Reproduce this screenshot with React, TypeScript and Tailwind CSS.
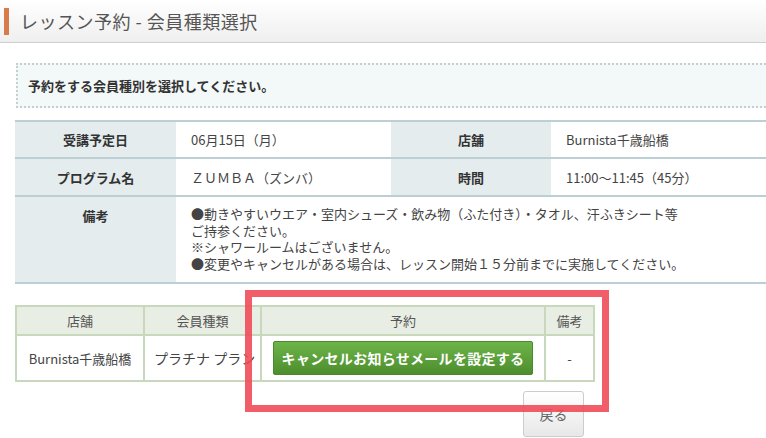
import React from 'react';

const remarks = [
  '●動きやすいウエア・室内シューズ・飲み物（ふた付き）・タオル、汗ふきシート等',
  'ご持参ください。',
  '※シャワールームはございません。',
  '●変更やキャンセルがある場合は、レッスン開始１５分前までに実施してください。',
];

export default function App() {
  const labelCell = 'bg-[#e4ecee] text-center font-bold text-[#333] align-middle';
  const valueCell = 'bg-white text-[#444] pl-[15px] align-middle';

  return (
    <div className="relative w-[766px] h-[438px] overflow-hidden bg-white font-['Noto_Sans_CJK_JP','Noto_Sans',sans-serif] text-[13px]">
      {/* page header */}
      <div className="h-[43px] border-b border-[#cfcfcf] bg-gradient-to-b from-white to-[#efefef] flex items-center">
        <div className="ml-[4px] w-[5px] h-[27px] bg-[#d97a4b]" />
        <h1 className="ml-[11px] text-[18px] leading-none text-[#555] tracking-[0.5px]">
          レッスン予約 - 会員種類選択
        </h1>
      </div>

      {/* notice */}
      <div className="mt-[20px] ml-[16px] h-[45px] bg-[#f3f8f9] border-y-2 border-l-2 border-dotted border-[#c3d0d3] flex items-center pl-[10px]">
        <p className="font-bold text-[#333] leading-none">予約をする会員種別を選択してください。</p>
      </div>

      {/* lesson info */}
      <table className="mt-[12px] ml-[15px] w-[751px] table-fixed border-collapse leading-none">
        <colgroup>
          <col className="w-[161px]" />
          <col className="w-[215px]" />
          <col className="w-[160px]" />
          <col className="w-[215px]" />
        </colgroup>
        <tbody>
          <tr className="h-[37px] border-y-2 border-[#bccfd5]">
            <th className={labelCell}>受講予定日</th>
            <td className={valueCell}>06月15日（月）</td>
            <th className={labelCell}>店舗</th>
            <td className={valueCell}>Burnista千歳船橋</td>
          </tr>
          <tr className="h-[38px] border-y-2 border-[#bccfd5]">
            <th className={labelCell}>プログラム名</th>
            <td className={valueCell}>ＺＵＭＢＡ（ズンバ）</td>
            <th className={labelCell}>時間</th>
            <td className={valueCell}>11:00～11:45（45分）</td>
          </tr>
          <tr className="h-[87px] border-y-2 border-[#bccfd5]">
            <th className={`${labelCell} !align-top pt-[12px]`}>備考</th>
            <td colSpan={3} className="bg-white text-[#444] pl-[15px] pt-[9px] pb-[9px] align-top leading-[16.7px]">
              {remarks.map((r) => (
                <div key={r}>{r}</div>
              ))}
            </td>
          </tr>
        </tbody>
      </table>

      {/* member type selection */}
      <table className="mt-[21px] ml-[15px] w-[578px] table-fixed border-collapse leading-none text-[#444]">
        <colgroup>
          <col className="w-[128px]" />
          <col className="w-[117px]" />
          <col className="w-[284px]" />
          <col className="w-[49px]" />
        </colgroup>
        <thead>
          <tr className="h-[29px] bg-[#e9eee4] text-[#555]">
            <th className="border-2 border-[#c8d8bd] font-normal">店舗</th>
            <th className="border-2 border-[#c8d8bd] font-normal">会員種類</th>
            <th className="border-2 border-[#c8d8bd] font-normal">予約</th>
            <th className="border-2 border-[#c8d8bd] font-normal">備考</th>
          </tr>
        </thead>
        <tbody>
          <tr className="h-[46px]">
            <td className="border-2 border-[#c8d8bd] text-center">Burnista千歳船橋</td>
            <td className="border-2 border-[#c8d8bd] pl-[9px] text-[14px] whitespace-nowrap overflow-hidden">プラチナ プラン</td>
            <td className="border-2 border-[#c8d8bd] pl-[11px]">
              <button className="w-[260px] h-[34px] rounded-[2px] border border-[#4a8a2c] bg-gradient-to-b from-[#6db449] to-[#4c8e2d] text-white font-bold text-[14px] tracking-[0.3px]">
                キャンセルお知らせメールを設定する
              </button>
            </td>
            <td className="border-2 border-[#c8d8bd] text-center">-</td>
          </tr>
        </tbody>
      </table>

      <button className="mt-[9px] ml-[523px] w-[61px] h-[46px] rounded-[3px] border border-[#cccccc] bg-gradient-to-b from-white to-[#e8e8e8] text-[#666] text-[14px] leading-none">
        戻る
      </button>

      {/* highlight overlay */}
      <div className="absolute left-[245px] top-[290px] w-[364px] h-[122px] border-[7px] border-[#ef4b58]/90 pointer-events-none" />
    </div>
  );
}
